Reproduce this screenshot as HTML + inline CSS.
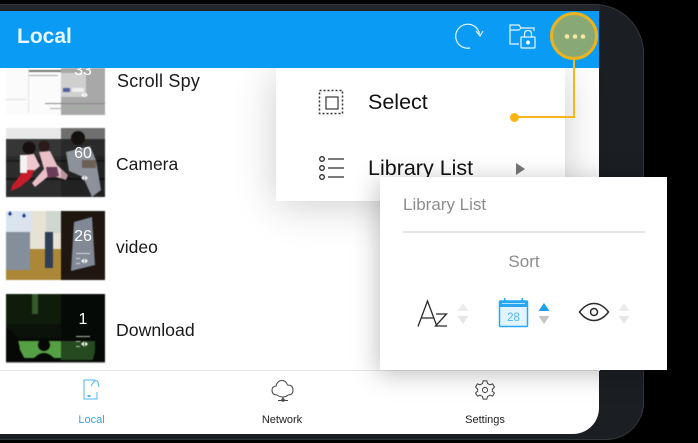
<!DOCTYPE html>
<html><head><meta charset="utf-8">
<style>
html,body{margin:0;padding:0;width:698px;height:443px;overflow:hidden;background:#000}
body{position:relative;font-family:"Liberation Sans",sans-serif}
.a{position:absolute}
.t{position:absolute;white-space:nowrap;color:#1a1a1a}
</style></head><body>
<div class="a" style="left:-40px;top:4px;width:684px;height:436px;background:#1b1e23;border-radius:0 50px 38px 0;box-shadow:inset -1px 0 0 #33363b,inset 0 1px 0 #33363b,inset 0 -1px 0 #33363b"></div>
<div class="a" style="left:0;top:5px;width:600px;height:7px;background:#23272c"></div>
<div class="a" id="screen" style="left:0;top:11px;width:599px;height:423px;background:#fff;border-radius:0 0 26px 0;overflow:hidden"></div>

<svg class="a" style="left:0;top:68px;filter:blur(.5px)" width="110" height="300" viewBox="0 68 110 300">
 <!-- scroll spy -->
 <rect x="6" y="68" width="99" height="47" fill="#fbfbfb"/>
 <rect x="61" y="68" width="44" height="47" fill="#a8a8a8"/>
 <rect x="28" y="70" width="33" height="2" fill="#777"/><rect x="28" y="75" width="30" height="1" fill="#aaa"/>
 <rect x="45" y="103" width="16" height="1" fill="#888"/><rect x="50" y="108" width="11" height="1" fill="#aaa"/>
 <rect x="6" y="99" width="20" height="1" fill="#ddd"/><rect x="28" y="68" width="1" height="45" fill="#e4e4e4"/>
 <rect x="61" y="73" width="25" height="24" fill="#cfcfcf"/><rect x="63" y="88" width="7" height="4" fill="#51649e"/><rect x="72" y="88" width="12" height="4" fill="#eee"/>
 <rect x="61" y="103" width="44" height="1" fill="#888"/><rect x="68" y="108" width="20" height="1" fill="#9db598"/>
 <!-- camera -->
 <rect x="6" y="128" width="99" height="69" fill="#2c2c2c"/>
 <rect x="6" y="128" width="55" height="11" fill="#e8e8e8"/><rect x="61" y="128" width="44" height="11" fill="#8f8f8f"/>
 <rect x="6" y="139" width="99" height="17" fill="#363636"/><rect x="6" y="160" width="99" height="2" fill="#1c1c1c"/><rect x="6" y="178" width="99" height="2" fill="#151515"/>
 <circle cx="29" cy="148" r="6.500" fill="#170f10"/><path d="M24 155 l10 -1 6 12 -6 5 -12 -1z" fill="#f0c8d0"/><path d="M24 170 l10 0 -3 8 -11 9 -9 4 1-5z" fill="#c71d2a"/><rect x="20" y="155" width="7" height="18" fill="#f3f3f3"/>
 <circle cx="44" cy="146" r="5.500" fill="#2a1a18"/><path d="M39 152 l11 -1 7 14 11 10 -2 5 -16 -5 -15 12 -3 -4 12 -14z" fill="#e9bfc8"/><path d="M46 167 l11 0 2 9 -11 2z" fill="#6a3c58"/>
 <circle cx="78" cy="138" r="7" fill="#1a1614"/><path d="M66 152 l24-6 6 14 5 30 -9 7 -9-20 -14-6z" fill="#b5bcc6"/><rect x="82" y="160" width="14" height="8" fill="#8b7b6e"/>
 <rect x="61" y="128" width="44" height="69" fill="#000" opacity=".22"/>
 <!-- video -->
 <rect x="6" y="211" width="99" height="69" fill="#3f2c18"/>
 <rect x="6" y="211" width="55" height="38" fill="#e6e2d4"/><rect x="6" y="249" width="55" height="31" fill="#ab8737"/>
 <rect x="61" y="211" width="44" height="69" fill="#241a12"/>
 <rect x="6" y="211" width="26" height="21" fill="#dbe4ee"/><rect x="6" y="232" width="24" height="38" fill="#858f9c"/>
 <path d="M10 211 l2 3 -2 2 -2-2z M24 213 l2 3 -2 2 -2-2z" fill="#203a90"/>
 <rect x="46" y="211" width="15" height="22" fill="#d0d6d0"/><rect x="45" y="232" width="8" height="36" fill="#2e3e55"/>
 <path d="M74 222 l18-5 3 48 -24 6z" fill="#98a2b2"/>
 <rect x="61" y="211" width="44" height="69" fill="#000" opacity=".15"/>
 <!-- download -->
 <rect x="6" y="294" width="99" height="69" fill="#060a06"/>
 <rect x="6" y="294" width="55" height="30" fill="#0f1c0c"/><rect x="32" y="294" width="6" height="20" fill="#335a28"/>
 <rect x="6" y="324" width="55" height="14" fill="#0a120a"/>
 <path d="M16 341 H61 V358 H16z" fill="#55a044"/><rect x="61" y="341" width="34" height="19" fill="#264a20"/>
 <circle cx="44" cy="345" r="6" fill="#050805"/><path d="M30 363 q14-20 28 0z" fill="#050805"/><path d="M6 328 q12 4 14 22 l7 13 H6z" fill="#050805"/>
 <path d="M92 363 q4-20 13-20 v20z" fill="#050805"/>
 <rect x="6" y="362" width="99" height="1" fill="#999"/>
 <!-- overlay arrows -->
 <g fill="#fff">
  <path d="M81 95 l3-2.500 v5z M85 92.500 l3 2.500 -3 2.500z"/>
  <path d="M81 178 l3-2.500 v5z M85 175.500 l3 2.500 -3 2.500z"/>
  <path d="M81 261 l3-2.500 v5z M85 258.500 l3 2.500 -3 2.500z"/>
  <path d="M81 344 l3-2.500 v5z M85 341.500 l3 2.500 -3 2.500z"/>
  <g opacity=".7"><rect x="76" y="253" width="14" height="1"/><rect x="76" y="258" width="4" height="1"/><rect x="76" y="263" width="4" height="1"/>
  <rect x="76" y="336" width="14" height="1"/><rect x="76" y="341" width="4" height="1"/><rect x="76" y="346" width="4" height="1"/></g>
 </g>
</svg>
<div class="t" style="left:60px;top:64px;width:46px;text-align:center;font-size:16px;color:#fff;height:16px;overflow:hidden;line-height:16px"><span style="position:relative;top:-1px">33</span></div>
<div class="t" style="left:60px;top:145px;width:46px;text-align:center;font-size:16px;color:#fff">60</div>
<div class="t" style="left:60px;top:228px;width:46px;text-align:center;font-size:16px;color:#fff">26</div>
<div class="t" style="left:60px;top:311px;width:46px;text-align:center;font-size:16px;color:#fff">1</div>

<div class="t" style="left:117px;top:71px;font-size:18px;letter-spacing:.2px">Scroll Spy</div>
<div class="t" style="left:116px;top:154px;font-size:17.500px">Camera</div>
<div class="t" style="left:116px;top:237px;font-size:17.500px">video</div>
<div class="t" style="left:116px;top:320px;font-size:17.700px">Download</div>

<!-- bottom nav -->
<div class="a" style="left:0;top:370px;width:600px;height:1px;background:#e6e6e6"></div>
<svg class="a" style="left:80px;top:378px" width="24" height="26" viewBox="0 0 24 26" fill="none" stroke="#4fb4ea" stroke-width="1">
 <path d="M15 2 H4 V21 H17 V14"/><path d="M11 8 L14 3.500 Q16 1.500 18 4 L19 9 "/><rect x="8" y="17.500" width="2" height="1" fill="#4fb4ea"/>
</svg>
<svg class="a" style="left:270px;top:378px" width="26" height="26" viewBox="0 0 26 26" fill="none" stroke="#444" stroke-width="1">
 <path d="M7 17 Q2 17 2 12 Q2 8.500 6 8 Q7.500 2.500 12 2.500 Q16 2.500 17.500 7 Q23 7 23 12 Q23 17 18 17"/><path d="M7 17 Q10 19 13 19 Q16 19 18 17"/><path d="M13 19 V22 M8 22.500 H18"/><circle cx="13" cy="22" r="1.300"/>
</svg>
<svg class="a" style="left:474px;top:379px" width="22" height="22" viewBox="0 0 24 24" fill="none" stroke="#444" stroke-width="1.100">
 <circle cx="12" cy="12" r="2.800"/>
 <path d="M10 2 H14 L14.800 5 L17.500 6.400 L20.300 5.300 L22.300 8.800 L20 11 V13.200 L22.300 15.200 L20.300 18.700 L17.500 17.600 L14.800 19 L14 22 H10 L9.200 19 L6.500 17.600 L3.700 18.700 L1.700 15.200 L4 13.200 V11 L1.700 8.800 L3.700 5.300 L6.500 6.400 L9.200 5z"/>
</svg>
<div class="t" style="left:60px;top:414px;width:63px;text-align:center;font-size:11px;color:#35a4e2">Local</div>
<div class="t" style="left:252px;top:414px;width:60px;text-align:center;font-size:11px;color:#222">Network</div>
<div class="t" style="left:455px;top:414px;width:60px;text-align:center;font-size:11px;color:#222">Settings</div>

<!-- popup 1 -->
<div class="a" style="left:276px;top:68px;width:289px;height:133px;background:#fff;box-shadow:0 4px 40px rgba(0,0,0,.2)"></div>
<div class="a" style="left:0;top:11px;width:599px;height:57px;background:#0a9bf4"></div>
<div class="t" style="left:17px;top:25px;font-size:21px;font-weight:bold;color:#e6f7ff">Local</div>
<svg class="a" style="left:318px;top:89px" width="28" height="28" viewBox="0 0 28 28" fill="none" stroke="#333">
 <rect x="1.500" y="1.500" width="23" height="23" stroke-dasharray="2 2" stroke-width="1.500"/>
 <rect x="8" y="8" width="12" height="12" stroke-width="1.300" stroke="#444"/>
</svg>
<svg class="a" style="left:317px;top:155px" width="30" height="28" viewBox="0 0 30 28" fill="none" stroke="#2a2a2a" stroke-width="1.300">
 <circle cx="5" cy="4" r="2.300"/><circle cx="5" cy="13" r="2.300"/><circle cx="5" cy="22" r="2.300"/>
 <path d="M11 4 H27 M11 13 H27 M11 22 H27"/>
</svg>
<div class="t" style="left:368px;top:90px;font-size:21.500px;color:#111">Select</div>
<div class="t" style="left:368px;top:156px;font-size:21.500px;color:#111">Library List</div>
<svg class="a" style="left:514px;top:161px" width="14" height="16"><path d="M2 2 L11 8 L2 14z" fill="#777"/></svg>

<!-- popup 2 -->
<div class="a" style="left:380px;top:177px;width:287px;height:193px;background:#fff;box-shadow:-2px 4px 24px rgba(0,0,0,.25)"></div>
<div class="t" style="left:403px;top:195px;font-size:17px;color:#8d8d8d">Library List</div>
<div class="a" style="left:403px;top:231px;width:242px;height:1.500px;background:#e3e3e3"></div>
<div class="t" style="left:480px;top:252px;width:88px;text-align:center;font-size:17px;color:#8d8d8d">Sort</div>

<svg class="a" style="left:415px;top:298px" width="40" height="32" viewBox="0 0 40 32" fill="none" stroke="#2a2a2a" stroke-width="1.300">
 <path d="M3 28.500 L12.500 3 L22 28.500 M6.500 20 H18.500"/><path d="M21 16 H31.500 L20.500 28 H32"/>
</svg>
<svg class="a" style="left:457px;top:302px" width="13" height="24" viewBox="0 0 13 24"><path d="M6 1 L11.500 9 H.5z" fill="#ececec"/><path d="M.5 14 H11.500 L6 22z" fill="#e6e6e6"/></svg>
<svg class="a" style="left:498px;top:297px" width="32" height="32" viewBox="0 0 32 32">
 <rect x="1.500" y="4" width="28" height="25.500" rx="1" fill="#e2f4ff" stroke="#26a7ef" stroke-width="1.500"/>
 <rect x="1.500" y="4" width="28" height="6" fill="#26a7ef"/>
 <rect x="6" y="1" width="1.500" height="5" fill="#26a7ef"/><rect x="23.500" y="1" width="1.500" height="5" fill="#26a7ef"/>
 <rect x="4" y="6" width="23" height="1" fill="#b8e4fb"/>
 <text x="15.500" y="24" text-anchor="middle" font-family="Liberation Sans,sans-serif" font-size="11.500" fill="#4fb8f0">28</text>
</svg>
<svg class="a" style="left:538px;top:302px" width="13" height="24" viewBox="0 0 13 24"><path d="M6 1 L11.500 9 H.5z" fill="#1aa2ee"/><path d="M.5 14 H11.500 L6 22z" fill="#c4c4c4"/></svg>
<svg class="a" style="left:578px;top:300px" width="32" height="24" viewBox="0 0 32 24" fill="none" stroke="#2a2a2a" stroke-width="1.500">
 <path d="M1.500 12 Q8 3.500 16 3.500 Q24 3.500 30.500 12 Q24 20.500 16 20.500 Q8 20.500 1.500 12z"/><circle cx="16" cy="12" r="3.500"/>
</svg>
<svg class="a" style="left:618px;top:302px" width="13" height="24" viewBox="0 0 13 24"><path d="M6 1 L11.500 9 H.5z" fill="#ececec"/><path d="M.5 14 H11.500 L6 22z" fill="#e6e6e6"/></svg>

<!-- header icons -->
<svg class="a" style="left:452px;top:20px" width="36" height="32" viewBox="0 0 36 32" fill="none" stroke="#e8f7ff" stroke-width="1.200">
 <path d="M27.500 14 A12 12 0 1 0 18 28"/><path d="M24 11 L28 16 L31 11"/>
</svg>
<svg class="a" style="left:507px;top:22px" width="32" height="28" viewBox="0 0 32 28" fill="none" stroke="#e8f7ff" stroke-width="1.200">
 <path d="M12 22 H3 V3 H12 L14 6 H27 V9"/><path d="M3 8 H12 L14 6"/>
 <rect x="14" y="15" width="14" height="11" rx=".5"/><path d="M17.500 15 V12 Q17.500 8.500 21 8.500 Q24.500 8.500 24.500 12 V15"/><circle cx="21" cy="20.500" r="1.500" fill="#e8f7ff"/>
</svg>
<svg class="a" style="left:500px;top:0" width="110" height="125" viewBox="500 0 110 125">
 <path d="M574 60 V117 H515" fill="none" stroke="#f6b519" stroke-width="2"/>
 <circle cx="514.500" cy="117.500" r="4.500" fill="#fdb515"/>
 <circle cx="574" cy="36" r="22.500" fill="#88a976" stroke="#eeb21c" stroke-width="3"/>
 <circle cx="567" cy="36.500" r="2.300" fill="#f5e6a0"/><circle cx="575" cy="36.500" r="2.300" fill="#f5e6a0"/><circle cx="583" cy="36.500" r="2.300" fill="#f5e6a0"/>
</svg>
</body></html>
